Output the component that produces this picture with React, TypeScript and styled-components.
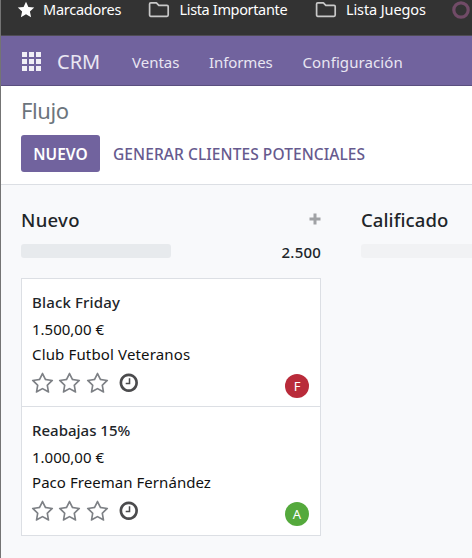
import React from 'react';
import styled, { createGlobalStyle } from 'styled-components';

const GlobalStyle = createGlobalStyle`
  *, *::before, *::after { box-sizing: border-box; }
  body {
    margin: 0;
    background: #f8f9fb;
    font-family: "Noto Sans", "Open Sans", sans-serif;
    font-size: 15px;
    color: #212529;
    overflow: hidden;
  }
`;

const Page = styled.div`
  width: 472px;
  height: 558px;
  border-left: 1px solid #747474;
  overflow: hidden;
  background: #f8f9fb;
  white-space: nowrap;
`;

const BookmarkBar = styled.div`
  height: 36px;
  background: #333333;
  border-bottom: 1px solid #4f4c55;
  display: flex;
  align-items: flex-start;
  overflow: hidden;
`;

const Bookmark = styled.div<{ $width: number }>`
  flex: none;
  width: ${(p) => p.$width}px;
  display: flex;
  color: #ffffff;
  font-size: 14.5px;
  line-height: 20px;

  svg { flex: none; }
`;

const BookmarkText = styled.span<{ $gap: number; $spacing: number }>`
  margin: -1px 0 0 ${(p) => p.$gap}px;
  letter-spacing: ${(p) => p.$spacing}px;
`;

const NavBar = styled.nav`
  height: 50px;
  background: #71639e;
  border-bottom: 1px solid #5a4f7f;
  display: flex;
  align-items: center;
  padding-left: 21px;
  color: #e9e6f2;
`;

const AppGrid = styled.div`
  display: grid;
  grid-template-columns: repeat(3, 5px);
  grid-auto-rows: 5px;
  column-gap: 2px;
  row-gap: 2px;
  margin-top: 1px;

  i { background: #f0eef6; }
`;

const Brand = styled.span`
  width: 75px;
  margin-left: 16px;
  font-size: 20px;
  line-height: 28px;
  margin-top: 3px;
`;

const NavLink = styled.span<{ $width: number; $spacing: number }>`
  width: ${(p) => p.$width}px;
  font-size: 15px;
  line-height: 20px;
  margin-top: 3px;
  letter-spacing: ${(p) => p.$spacing}px;
`;

const ControlPanel = styled.header`
  height: 99px;
  background: #ffffff;
  border-bottom: 1px solid #dcdfe4;
  padding: 9px 0 0 20px;
`;

const Title = styled.h1`
  margin: 0;
  font-size: 22px;
  font-weight: 400;
  line-height: 30px;
  letter-spacing: -0.4px;
  color: #6c757d;
`;

const Actions = styled.div`
  display: flex;
  margin-top: 10px;
`;

const PrimaryButton = styled.button`
  width: 79px;
  height: 37px;
  padding: 1px 0 0;
  border: 0;
  border-radius: 3px;
  background: #71639e;
  color: #ffffff;
  font: 600 15.5px/20px "Noto Sans", sans-serif;
`;

const LinkButton = styled.button`
  height: 37px;
  margin-left: 13px;
  padding: 1px 0 0;
  border: 0;
  background: transparent;
  color: #665a8e;
  font: 500 15.5px/20px "Noto Sans", sans-serif;
  letter-spacing: 0.08px;
`;

const Board = styled.main`
  display: flex;
  gap: 40px;
  padding: 21px 0 0 20px;
`;

const Column = styled.section`
  flex: none;
  width: 300px;
`;

const ColumnHeader = styled.div`
  height: 29px;
  display: flex;
  justify-content: space-between;
`;

const ColumnTitle = styled.h2<{ $spacing: number }>`
  margin: 0;
  font-size: 18.5px;
  font-weight: 500;
  line-height: 28px;
  letter-spacing: ${(p) => p.$spacing}px;
`;

const PlusIcon = styled.svg`
  margin-top: 7px;
`;

const Summary = styled.div`
  height: 43px;
  padding-top: 9px;
  display: flex;
  align-items: flex-start;
  justify-content: space-between;
`;

const Progress = styled.div<{ $empty?: boolean }>`
  width: 150px;
  height: 14px;
  border-radius: 3px;
  background: ${(p) => (p.$empty ? '#f1f2f4' : '#e7eaed')};
`;

const Total = styled.span`
  font-weight: 500;
  font-size: 15px;
  line-height: 20px;
  margin-top: -2px;
  letter-spacing: 0.2px;
`;

const Card = styled.article`
  height: 129px;
  border: 1px solid #dcdfe4;
  background: #ffffff;
  padding: 10px 11px 0 10px;

  & + & { margin-top: -1px; height: 130px; }
`;

const CardTitle = styled.div<{ $spacing: number }>`
  margin-bottom: 1px;
  font-weight: 500;
  line-height: 26px;
  letter-spacing: ${(p) => p.$spacing}px;
`;

const CardLine = styled.div<{ $spacing: number; $height: number }>`
  color: #111111;
  line-height: ${(p) => p.$height}px;
  letter-spacing: ${(p) => p.$spacing}px;
`;

const CardFooter = styled.div`
  display: flex;
  align-items: flex-start;
  padding-top: 6px;
  height: 32px;
`;

const Stars = styled.div`
  display: flex;
  gap: 4.3px;
  margin: 0 9px 0 -1px;
  color: #7d8085;
`;

const Icon = styled.svg<{ $size: number }>`
  flex: none;
  width: ${(p) => p.$size}px;
  height: ${(p) => p.$size}px;
  fill: currentColor;
`;

const ClockIcon = styled(Icon)`
  color: #4b4b4d;
`;

const Avatar = styled.span<{ $color: string }>`
  width: 24px;
  height: 24px;
  margin: 2px 0 0 auto;
  border-radius: 50%;
  background: ${(p) => p.$color};
  color: #ffffff;
  font-size: 13px;
  line-height: 24px;
  text-align: center;
`;

const STAR_PATH =
  'M1201 1004l306-297-422-62-189-382-189 382-422 62 306 297-73 421 378-199 377 199zm527-357q0 22-26 48l-363 354 86 500q1 7 1 20 0 50-41 50-19 0-40-12l-449-236-449 236q-22 12-40 12-21 0-31.5-14.5t-10.5-35.5q0-6 2-20l86-500-364-354q-25-27-25-48 0-37 56-46l502-73 225-455q19-41 49-41t49 41l225 455 502 73q56 9 56 46z';
const CLOCK_PATH =
  'M1024 544v448q0 14-9 23t-23 9h-320q-14 0-23-9t-9-23v-64q0-14 9-23t23-9h224v-352q0-14 9-23t23-9h64q14 0 23 9t9 23zm416 352q0-148-73-273t-198-198-273-73-273 73-198 198-73 273 73 273 198 198 273 73 273-73 198-198 73-273zm224 0q0 209-103 385.5t-279.5 279.5-385.5 103-385.5-103-279.5-279.5-103-385.5 103-385.5 279.5-279.5 385.5-103 385.5 103 279.5 279.5 103 385.5z';

const Folder = () => (
  <svg width="22" height="20" viewBox="0 0 22 20" fill="none" stroke="#c9c9c9" strokeWidth="1.7" strokeLinejoin="round">
    <path d="M2.8 2.9h5.6l2.4 2.4h8.2q1.2 0 1.2 1.2v8.6q0 1.2-1.2 1.2H2.8q-1.2 0-1.2-1.2V4.1q0-1.2 1.2-1.2z" />
  </svg>
);

interface Lead {
  title: string;
  amount: string;
  customer: string;
  initial: string;
  color: string;
  titleSpacing: number;
  customerSpacing: number;
}

const leads: Lead[] = [
  {
    title: 'Black Friday',
    amount: '1.500,00 €',
    customer: 'Club Futbol Veteranos',
    initial: 'F',
    color: '#b92b3a',
    titleSpacing: 0.15,
    customerSpacing: 0.15,
  },
  {
    title: 'Reabajas 15%',
    amount: '1.000,00 €',
    customer: 'Paco Freeman Fernández',
    initial: 'A',
    color: '#54a93c',
    titleSpacing: 0,
    customerSpacing: 0.05,
  },
];

const LeadCard = ({ lead }: { lead: Lead }) => (
  <Card>
    <CardTitle $spacing={lead.titleSpacing}>{lead.title}</CardTitle>
    <CardLine $spacing={0} $height={27}>{lead.amount}</CardLine>
    <CardLine $spacing={lead.customerSpacing} $height={23}>{lead.customer}</CardLine>
    <CardFooter>
      <Stars>
        {[0, 1, 2].map((n) => (
          <Icon key={n} $size={23} viewBox="0 0 1792 1792">
            <path d={STAR_PATH} />
          </Icon>
        ))}
      </Stars>
      <ClockIcon $size={21.5} viewBox="0 0 1792 1792">
        <path d={CLOCK_PATH} />
      </ClockIcon>
      <Avatar $color={lead.color}>{lead.initial}</Avatar>
    </CardFooter>
  </Card>
);

export default function App() {
  return (
    <>
      <GlobalStyle />
      <Page>
        <BookmarkBar>
          <Bookmark $width={147}>
            <svg width="34" height="20" viewBox="0 0 34 20">
              <path d="M25 1.7l2.4 5.3 5.8.6-4.3 3.9 1.2 5.7-5.1-2.9-5.1 2.9 1.2-5.7-4.3-3.9 5.8-.6z" fill="#fff" />
            </svg>
            <BookmarkText $gap={8} $spacing={-0.25}>Marcadores</BookmarkText>
          </Bookmark>
          <Bookmark $width={167}>
            <Folder />
            <BookmarkText $gap={9.5} $spacing={-0.35}>Lista Importante</BookmarkText>
          </Bookmark>
          <Bookmark $width={137}>
            <Folder />
            <BookmarkText $gap={9} $spacing={-0.12}>Lista Juegos</BookmarkText>
          </Bookmark>
          <svg width="20" height="20" viewBox="0 0 20 20">
            <circle cx="9" cy="10" r="7.2" fill="none" stroke="#714b67" strokeWidth="3.2" />
          </svg>
        </BookmarkBar>
        <NavBar>
          <AppGrid>
            {Array.from({ length: 9 }, (_, n) => <i key={n} />)}
          </AppGrid>
          <Brand>CRM</Brand>
          <NavLink $width={77} $spacing={0}>Ventas</NavLink>
          <NavLink $width={93.5} $spacing={-0.1}>Informes</NavLink>
          <NavLink $width={110} $spacing={0.1}>Configuración</NavLink>
        </NavBar>
        <ControlPanel>
          <Title>Flujo</Title>
          <Actions>
            <PrimaryButton>NUEVO</PrimaryButton>
            <LinkButton>GENERAR CLIENTES POTENCIALES</LinkButton>
          </Actions>
        </ControlPanel>
        <Board>
          <Column>
            <ColumnHeader>
              <ColumnTitle $spacing={0.3}>Nuevo</ColumnTitle>
              <PlusIcon width="12" height="12" viewBox="0 0 12 12">
                <path d="M4.5 0.5h3v4h4v3h-4v4h-3v-4h-4v-3h4z" fill="#a0a2a5" />
              </PlusIcon>
            </ColumnHeader>
            <Summary>
              <Progress />
              <Total>2.500</Total>
            </Summary>
            {leads.map((lead) => <LeadCard key={lead.title} lead={lead} />)}
          </Column>
          <Column>
            <ColumnHeader>
              <ColumnTitle $spacing={0.1}>Calificado</ColumnTitle>
            </ColumnHeader>
            <Summary>
              <Progress $empty />
            </Summary>
          </Column>
        </Board>
      </Page>
    </>
  );
}
